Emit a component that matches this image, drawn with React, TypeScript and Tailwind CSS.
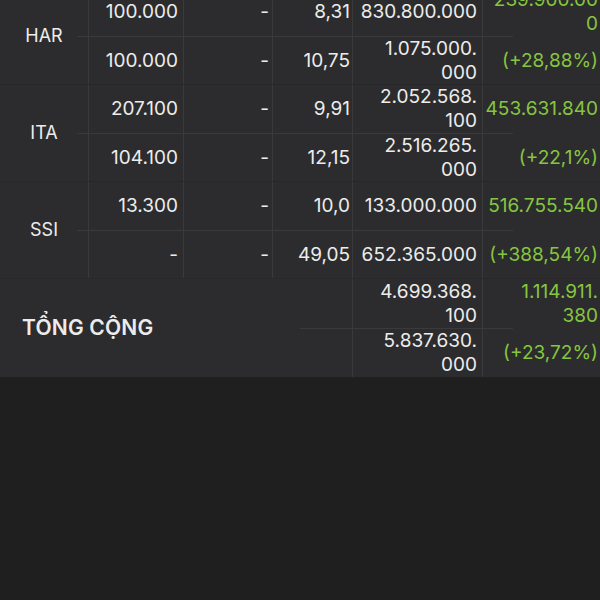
import React from "react";

type Row = [string, string, string, string[], string[]];
type Group = { label: string; rows: [Row, Row] };

const groups: Group[] = [
  {
    label: "HAR",
    rows: [
      ["100.000", "-", "8,31", ["830.800.000"], ["239.900.00", "0"]],
      ["100.000", "-", "10,75", ["1.075.000.", "000"], ["(+28,88%)"]],
    ],
  },
  {
    label: "ITA",
    rows: [
      ["207.100", "-", "9,91", ["2.052.568.", "100"], ["453.631.840"]],
      ["104.100", "-", "12,15", ["2.516.265.", "000"], ["(+22,1%)"]],
    ],
  },
  {
    label: "SSI",
    rows: [
      ["13.300", "-", "10,0", ["133.000.000"], ["516.755.540"]],
      ["-", "-", "49,05", ["652.365.000"], ["(+388,54%)"]],
    ],
  },
];

function Lines({ lines }: { lines: string[] }) {
  return (
    <span className="block">
      {lines.map((l, i) => (
        <span key={i} className="block">
          {l}
        </span>
      ))}
    </span>
  );
}

function SubRow({ row, h }: { row: Row; h: string }) {
  return (
    <div className={`flex ${h}`}>
      <div className="w-[95px] border-r border-[#3a3a3c] flex items-center justify-end pr-[5px]">
        {row[0]}
      </div>
      <div className="w-[89px] border-r border-[#3a3a3c] flex items-center justify-end pr-[3px]">
        {row[1]}
      </div>
      <div className="w-[80px] border-r border-[#3a3a3c] flex items-center justify-end pr-[2px]">
        {row[2]}
      </div>
      <div className="w-[130px] border-r border-[#3a3a3c] flex items-center justify-end pr-[5px] text-right">
        <Lines lines={row[3]} />
      </div>
      <div className="w-[117px] flex items-center justify-end pr-[2px] text-right text-[#86c63f]">
        <Lines lines={row[4]} />
      </div>
    </div>
  );
}

export default function App() {
  return (
    <div
      className="w-[600px] h-[600px] bg-[#1f1f1f] overflow-hidden text-[#ececec]"
      style={{ fontFamily: "Inter, 'Noto Sans', sans-serif" }}
    >
      <div className="bg-[#2c2c2e] -mt-[12px] text-[19px] leading-[24px]">
        {groups.map((g) => (
          <div key={g.label} className="flex h-[97px] border-b border-[#28282a]">
            <div className="w-[89px] border-r border-[#3a3a3c] flex items-center justify-center text-[18px]">
              {g.label}
            </div>
            <div className="flex flex-col">
              <SubRow row={g.rows[0]} h="h-[48px]" />
              <div className="h-px bg-[#3a3a3c] -ml-[12px] w-[436px]" />
              <SubRow row={g.rows[1]} h="h-[47px]" />
            </div>
          </div>
        ))}
        <div className="flex h-[98px]">
          <div className="w-[353px] border-r border-[#3a3a3c] flex items-center pl-[22px] text-[21px] font-semibold tracking-[0.2px]">
            TỔNG CỘNG
          </div>
          <div className="flex flex-col">
            <div className="flex h-[49px]">
              <div className="w-[130px] border-r border-[#3a3a3c] flex items-center justify-end pr-[5px] text-right">
                <Lines lines={["4.699.368.", "100"]} />
              </div>
              <div className="w-[117px] flex items-center justify-end pr-[2px] text-right text-[#86c63f]">
                <Lines lines={["1.114.911.", "380"]} />
              </div>
            </div>
            <div className="h-px bg-[#3a3a3c] -ml-[53px] w-[213px]" />
            <div className="flex h-[48px]">
              <div className="w-[130px] border-r border-[#3a3a3c] flex items-center justify-end pr-[5px] text-right">
                <Lines lines={["5.837.630.", "000"]} />
              </div>
              <div className="w-[117px] flex items-center justify-end pr-[2px] text-right text-[#86c63f]">
                <Lines lines={["(+23,72%)"]} />
              </div>
            </div>
          </div>
        </div>
      </div>
    </div>
  );
}
